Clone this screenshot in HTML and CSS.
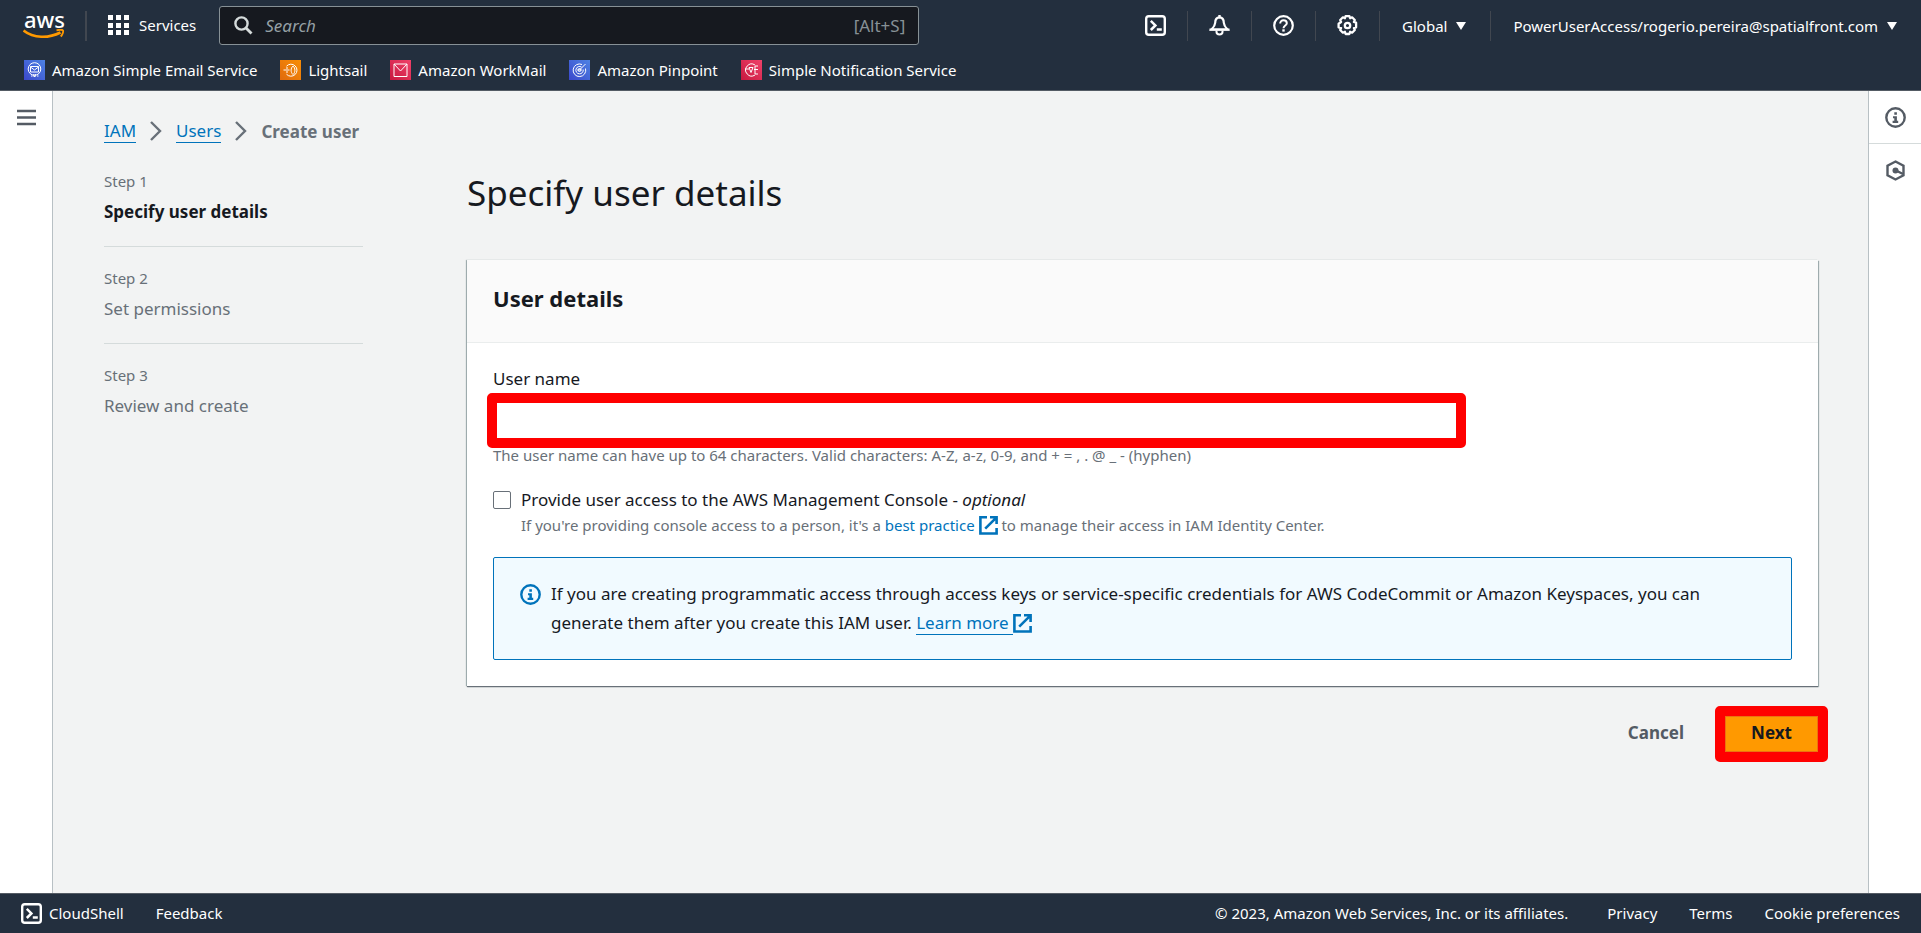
FILE: index.html
```html
<!DOCTYPE html>
<html lang="en">
<head>
<meta charset="utf-8">
<meta name="viewport" content="width=device-width, initial-scale=1">
<title>Create user | IAM</title>
<link rel="stylesheet" href="styles.css">
</head>
<body>
<svg class="defs" aria-hidden="true">
  <symbol id="shell" viewBox="0 0 21 21"><rect x="1.200" y="1.200" width="18.600" height="18.600" rx="2.600" fill="none" stroke="currentColor" stroke-width="2.400"/><path d="M5.800 5.800l4.600 4.600-4.600 4.600M11.800 14.600h5" fill="none" stroke="currentColor" stroke-width="2.500"/></symbol>
  <symbol id="info" viewBox="0 0 21 21"><circle cx="10.500" cy="10.500" r="9.200" fill="none" stroke="currentColor" stroke-width="2.400"/><path d="M9.300 5.200h2.600v2.600H9.300zM8 9.200h3.900v4.600h1.300v2.100H7.600v-2.100h1.700v-2.600H8z" fill="currentColor"/></symbol>
  <symbol id="external" viewBox="0 0 19 19"><path d="M8 1.300H1.400v16.200h16.200V12M11 1.300h6.600V8M17.300 1.600L6.200 12.700" fill="none" stroke="currentColor" stroke-width="2.600"/></symbol>
  <symbol id="chevron" viewBox="0 0 12 20"><path d="M1 1l9 9-9 9" fill="none" stroke="currentColor" stroke-width="2.400"/></symbol>
</svg>

<header class="header">
  <nav class="topbar" aria-label="Global">
    <a class="logo" href="#" aria-label="AWS home">
      <span class="logo-text">aws</span>
      <svg class="logo-smile" width="42" height="10" viewBox="0 0 42 10"><path d="M.5 1.500c10 8 25 8 37 2" fill="none" stroke="#ff9900" stroke-width="2.600"/><path d="M33.500 1.300c2.800-.8 6-.6 6.500.2.500 1-.3 4-2.300 6" fill="none" stroke="#ff9900" stroke-width="1.800"/></svg>
    </a>
    <span class="rule"></span>
    <button class="services" type="button">
      <svg width="21" height="20" viewBox="0 0 21 20" fill="currentColor"><path d="M0 0h5v5H0zM8 0h5v5H8zM16 0h5v5h-5zM0 8h5v5H0zM8 8h5v5H8zM16 8h5v5h-5zM0 15h5v5H0zM8 15h5v5H8zM16 15h5v5h-5z"/></svg>
      Services
    </button>
    <label class="search">
      <svg width="19" height="19" viewBox="0 0 19 19"><circle cx="7.500" cy="7.500" r="6.100" fill="none" stroke="currentColor" stroke-width="2.400"/><path d="M12 12l5.500 5.500" stroke="currentColor" stroke-width="2.800"/></svg>
      <input class="search-input" type="search" placeholder="Search" aria-label="Search">
      <span class="search-key">[Alt+S]</span>
    </label>
    <div class="tools">
      <button class="tool" type="button" aria-label="CloudShell"><svg width="21" height="21"><use href="#shell"/></svg></button>
      <button class="tool" type="button" aria-label="Notifications"><svg width="21" height="21" viewBox="0 0 21 21"><path d="M10.500 2.300c-3.500.3-4.300 2.700-4.300 5.400-.2 3.200-1.600 4.700-3.700 6.800h16c-2.100-2.100-3.500-3.600-3.700-6.800 0-2.700-.8-5.100-4.300-5.400z" fill="none" stroke="currentColor" stroke-width="2.200"/><path d="M9.300 0h2.400v3H9.300zM.5 13.400h20v2.300H.5z" fill="currentColor"/><path d="M7.500 15.500v1.600c0 1.500 1 2.400 3 2.400s3-.9 3-2.400v-1.600" fill="none" stroke="currentColor" stroke-width="2"/></svg></button>
      <button class="tool" type="button" aria-label="Help"><svg width="21" height="21" viewBox="0 0 21 21"><circle cx="10.500" cy="10.500" r="9.300" fill="none" stroke="currentColor" stroke-width="2.200"/><path d="M7.200 8.600C7.200 6.400 8.600 5.300 10.500 5.300s3.300 1.200 3.300 2.900c0 2.400-3.300 2.300-3.300 5" fill="none" stroke="currentColor" stroke-width="2"/><path d="M9.300 14.300h2.400v2.300H9.300z" fill="currentColor"/></svg></button>
      <button class="tool" type="button" aria-label="Settings"><svg width="21" height="21" viewBox="0 0 21 21" fill="none" stroke="currentColor"><path d="M8.600 1.200h3.800l.7 2 2-.9 2.700 2.700-.9 2 2.200.7v4.600l-2.200.7.900 2-2.700 2.700-2-.9-.7 2.200H8.600l-.7-2.200-2 .9L3.200 15l.9-2-2.500-.7V8.700L4.100 7l-.9-2 2.700-2.700 2 .9z" stroke-width="2.300" stroke-linejoin="round"/><circle cx="10.500" cy="10.500" r="2.700" stroke-width="2.300"/></svg></button>
      <button class="menu" type="button">Global <span class="caret"></span></button>
      <button class="menu" type="button">PowerUserAccess/rogerio.pereira@spatialfront.com <span class="caret"></span></button>
    </div>
  </nav>
  <nav class="favorites" aria-label="Favorites">
    <a class="favorite" href="#"><svg class="tile blue" viewBox="0 0 21 20"><circle cx="10.500" cy="9" r="6.300"/><path d="M6.500 6.500h8v5.500h-8zM6.500 7l4 3 4-3M7 16h1.500M9.800 14v2.500h1.500V14M13 16h1.500"/></svg>Amazon Simple Email Service</a>
    <a class="favorite" href="#"><svg class="tile orange" viewBox="0 0 21 20"><path d="M6.500 6.200a6 6 0 1 1 0 8M3.500 10h6M6 8h2M6 12h2M13 6c-2.500 2-2.500 6.500 0 8.500 2.500-2 2.500-6.500 0-8.500z"/></svg>Lightsail</a>
    <a class="favorite" href="#"><svg class="tile red" viewBox="0 0 21 20"><path d="M4 4h13v12.500H4zM4 4l6.500 7L17 4"/></svg>Amazon WorkMail</a>
    <a class="favorite" href="#"><svg class="tile blue" viewBox="0 0 21 20"><path d="M13 4.500a6.300 6.300 0 1 0 3.500 4M12.500 7a3.700 3.700 0 1 0 1.700 2.500M10.500 10l6-6M8.500 10h4"/><circle cx="10.500" cy="10" r="1.500"/></svg>Amazon Pinpoint</a>
    <a class="favorite" href="#"><svg class="tile red" viewBox="0 0 21 20"><path d="M14 5a6 6 0 1 0 0 10M4 9h4M8 7.500h4l-2 5zM13 9.500h4M14 6v8M14 6h3M14 14h3"/></svg>Simple Notification Service</a>
  </nav>
</header>

<div class="workspace">
  <aside class="rail rail-left">
    <button class="rail-button" type="button" aria-label="Open navigation"><svg width="19" height="17" viewBox="0 0 19 17"><path d="M0 2h19M0 8.500h19M0 15h19" stroke="currentColor" stroke-width="2.600"/></svg></button>
  </aside>

  <main class="main">
    <nav class="crumbs" aria-label="Breadcrumb">
      <a class="underlined" href="#">IAM</a>
      <svg width="12" height="20"><use href="#chevron"/></svg>
      <a class="underlined" href="#">Users</a>
      <svg width="12" height="20"><use href="#chevron"/></svg>
      <span class="crumb-current">Create user</span>
    </nav>
    <div class="wizard">
      <ol class="steps">
        <li class="step current"><span class="step-number">Step 1</span><span>Specify user details</span></li>
        <li class="step"><span class="step-number">Step 2</span><span>Set permissions</span></li>
        <li class="step"><span class="step-number">Step 3</span><span>Review and create</span></li>
      </ol>
      <form class="form">
        <h1 class="title">Specify user details</h1>
        <section class="card">
          <h2 class="card-head">User details</h2>
          <div class="card-body">
            <label class="field-label" for="username">User name</label>
            <div class="callout callout-field"><input class="field" id="username" type="text" aria-describedby="hint"></div>
            <p class="hint" id="hint">The user name can have up to 64 characters. Valid characters: A-Z, a-z, 0-9, and + = , . @ _ - (hyphen)</p>
            <div class="check">
              <input class="checkbox" id="console" type="checkbox">
              <div>
                <label class="check-label" for="console">Provide user access to the AWS Management Console - <em>optional</em></label>
                <p class="check-hint">If you're providing console access to a person, it's a <a class="link" href="#">best practice <svg class="ext" width="19" height="19"><use href="#external"/></svg></a> to manage their access in IAM Identity Center.</p>
              </div>
            </div>
            <div class="alert">
              <svg class="alert-icon" width="21" height="21"><use href="#info"/></svg>
              <p class="alert-text">If you are creating programmatic access through access keys or service-specific credentials for AWS CodeCommit or Amazon Keyspaces, you can generate them after you create this IAM user. <a class="underlined" href="#">Learn more&nbsp;</a><svg class="ext" width="19" height="19"><use href="#external"/></svg></p>
            </div>
          </div>
        </section>
        <div class="actions">
          <button class="cancel" type="button">Cancel</button>
          <div class="callout callout-button"><button class="next" type="button">Next</button></div>
        </div>
      </form>
    </div>
  </main>

  <aside class="rail rail-right">
    <button class="rail-button" type="button" aria-label="Info"><svg width="21" height="21"><use href="#info"/></svg></button>
    <button class="rail-button" type="button" aria-label="Tutorials"><svg width="19" height="21" viewBox="0 0 19 21"><path d="M9.500 1.500l8 4.300v9.400l-8 4.300-8-4.300V5.800z" fill="none" stroke="currentColor" stroke-width="2.400"/><circle cx="9.500" cy="10.500" r="3" fill="currentColor"/><path d="M10 10.500l7 3.500" stroke="currentColor" stroke-width="2.400"/></svg></button>
  </aside>
</div>

<footer class="footer">
  <a class="shell-link" href="#"><svg width="21" height="21"><use href="#shell"/></svg>CloudShell</a>
  <a href="#">Feedback</a>
  <span class="copyright">© 2023, Amazon Web Services, Inc. or its affiliates.</span>
  <a href="#">Privacy</a>
  <a href="#">Terms</a>
  <a href="#">Cookie preferences</a>
</footer>
</body>
</html>
```

FILE: styles.css
```css
* { box-sizing: border-box; }

body {
  margin: 0;
  min-height: 100vh;
  display: flex;
  flex-direction: column;
  font: 17px/29px "Noto Sans", "Open Sans", sans-serif;
  color: #16191f;
  background: #f2f3f3;
}

button, input { font: inherit; color: inherit; }
button { padding: 0; border: 0; background: none; cursor: pointer; }
h1, h2, p, ol { margin: 0; padding: 0; }
a { color: inherit; text-decoration: none; }
svg { flex: none; }
.defs { position: absolute; width: 0; height: 0; }

/* Header */
.header {
  background: #232f3e;
  color: #fff;
  border-bottom: 1px solid #545b64;
  font-size: 15px;
  line-height: 20px;
}
.topbar { display: flex; align-items: center; height: 51px; padding: 0 24px 0 23px; }
.logo { display: flex; flex-direction: column; align-items: flex-start; padding-bottom: 3px; }
.logo-text { font-size: 22px; font-weight: 500; line-height: 20px; padding-left: 1px; }
.logo-smile { display: block; }
.rule { width: 2px; height: 30px; margin: 0 21px 0 20px; background: #414750; }
.services { display: flex; align-items: center; gap: 10px; padding-bottom: 1px; }
.search {
  display: flex;
  align-items: center;
  flex: 0 1 700px;
  height: 39px;
  margin-left: 23px;
  padding: 0 13px 0 14px;
  gap: 12px;
  border: 1px solid #879196;
  border-radius: 3px;
  background: #16191f;
  color: #d5dbdb;
  font-size: 17px;
}
.search-input { flex: 1; min-width: 0; border: 0; padding: 0; outline: 0; background: none; }
.search-input::placeholder { color: #95a0a5; font-style: italic; opacity: 1; }
.search-key { color: #879196; }
.tools { display: flex; align-items: center; margin-left: auto; }
.tool, .menu { display: flex; align-items: center; height: 30px; }
.tool { padding: 0 21px; border-right: 1px solid #414750; }
.menu { gap: 9px; padding-left: 22px; white-space: nowrap; }
.menu + .menu { margin-left: 24px; border-left: 1px solid #414750; }
.caret { border: 5px solid transparent; border-top: 8px solid #fff; border-bottom: 0; }
.favorites { display: flex; gap: 23px; height: 39px; padding: 0 24px 2px; align-items: center; }
.favorite { display: flex; align-items: center; gap: 7px; white-space: nowrap; }
.tile { width: 21px; height: 20px; fill: none; stroke: #fff; stroke-width: 1; }
.blue { background: linear-gradient(45deg, #3b48cc, #4d82e3); }
.orange { background: linear-gradient(45deg, #e06a0c, #f88e06); }
.red { background: linear-gradient(45deg, #c7183f, #f0426a); }

/* Side rails */
.workspace { display: flex; flex: 1; }
.rail { flex: none; background: #fff; color: #545b64; }
.rail-left { width: 53px; border-right: 1px solid #b8c0c4; }
.rail-right { width: 53px; border-left: 1px solid #b8c0c4; }
.rail-button { display: flex; align-items: center; justify-content: center; width: 100%; height: 53px; }
.rail-right .rail-button:first-child { border-bottom: 1px solid #d5dbdb; }

/* Main area */
.main { flex: 1; min-width: 0; padding: 25px 50px 40px 51px; }
.crumbs { display: flex; align-items: center; gap: 14px; height: 30px; color: #687078; }
.underlined { color: #0073bb; line-height: 22px; border-bottom: 1px solid #0073bb; }
.crumb-current { font-weight: 700; }
.wizard { display: grid; grid-template-columns: 259px minmax(0, 1fr); column-gap: 104px; padding-top: 25px; }
.steps { list-style: none; color: #687078; }
.step { display: flex; flex-direction: column; height: 97px; gap: 6px; }
.step:not(:last-child)::after { content: ""; height: 1px; margin-top: 14px; background: #d5dbdb; }
.step-number { font-size: 15px; line-height: 20px; }
.step.current { color: #16191f; font-weight: 700; }
.current .step-number { color: #687078; font-weight: 400; }
.title { font-size: 35px; font-weight: 400; line-height: 44px; padding: 0 0 45px; }

.card { background: #fff; box-shadow: 0 1px 1px #687078, 1px 1px 1px #aab7b8, -1px 0 1px #aab7b8; }
.card-head { padding: 24px 26px 29px; border-bottom: 1px solid #eaeded; background: #fafafa; font-size: 22px; font-weight: 700; line-height: 29px; }
.card-body { padding: 21px 26px 26px; }
.field-label { display: block; }
.field { display: block; width: 100%; height: 43px; padding: 0 12px; border: 1px solid #aab7b8; border-radius: 2px; background: #fff; }
.hint { font-size: 15px; line-height: 20px; color: #687078; padding-top: 3px; }
.check { display: flex; gap: 10px; padding-top: 20px; }
.checkbox { appearance: none; flex: none; width: 18px; height: 18px; margin: 6px 0; border: 1px solid #687078; border-radius: 2px; background: #fff; }
.check-label { display: block; }
.check-hint { font-size: 15px; line-height: 22px; color: #687078; }
.link { color: #0073bb; white-space: nowrap; }
.ext { vertical-align: -4px; color: #0073bb; }
.alert { display: flex; gap: 10px; margin-top: 21px; padding: 21px 26px 22px; border: 1px solid #0073bb; border-radius: 2px; background: #f1faff; }
.alert-icon { margin-top: 5px; color: #0073bb; }

.callout { position: relative; }
.callout::after { content: ""; position: absolute; border: 10px solid #f00; border-radius: 5px; pointer-events: none; }
.callout-field { width: calc(75% - 7px); margin-top: 6px; }
.callout-field::after { inset: -6px; }
.callout-button::after { inset: -10px; }

.actions { display: flex; justify-content: flex-end; align-items: center; gap: 41px; padding-top: 30px; font-weight: 700; }
.cancel { color: #545b64; padding-bottom: 4px; }
.next { display: block; width: 93px; height: 36px; padding-bottom: 4px; border: 1px solid #ec7211; background: #ff9900; }

/* Footer */
.footer {
  display: flex;
  align-items: center;
  gap: 32px;
  height: 40px;
  padding: 0 21px 1px;
  border-top: 1px solid #545b64;
  background: #232f3e;
  color: #fff;
  font-size: 15px;
  line-height: 20px;
  white-space: nowrap;
}
.shell-link { display: flex; align-items: center; gap: 7px; }
.copyright { margin-left: auto; padding-right: 7px; }
```
